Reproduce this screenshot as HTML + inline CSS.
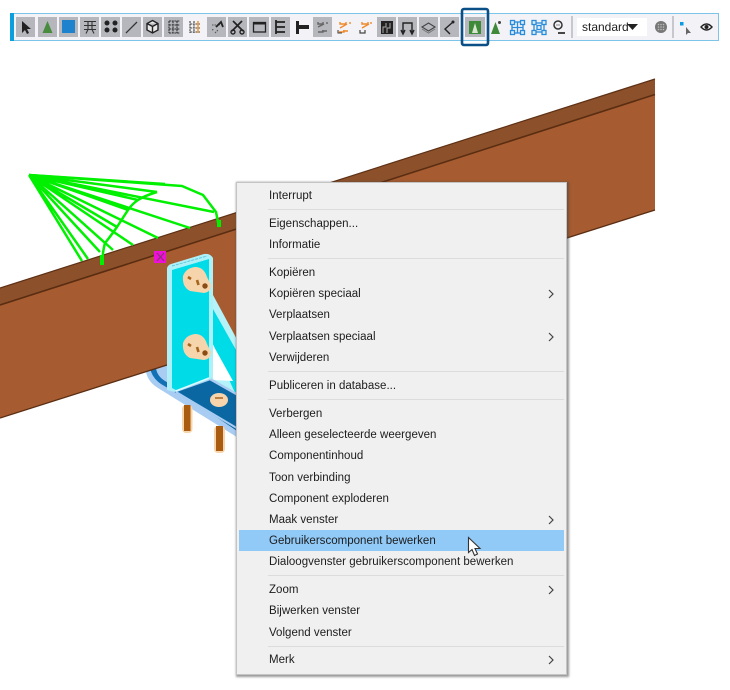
<!DOCTYPE html>
<html><head><meta charset="utf-8">
<style>
html,body{margin:0;padding:0;background:#fff;width:730px;height:690px;overflow:hidden}
#g{position:absolute;left:0;top:0}
#m{position:absolute;left:236px;top:182px;width:329px;height:491px;background:#f0f0f0;border:1px solid #c4c4c4;box-shadow:1px 1px 2px 1px rgba(70,70,70,.55)}
#m div{position:absolute;left:32px;font:11.5px/14px "Liberation Sans",sans-serif;color:#1c1c1c;white-space:nowrap;letter-spacing:.02px}
#m i{position:absolute;left:31px;width:296px;height:1px;background:#dcdcdc}
#m b{position:absolute;left:2px;top:347px;width:325px;height:21px;background:#91c9f7}
#m svg{position:absolute;left:311px}
#s{position:absolute;left:577px;top:18px;width:70px;height:18px;background:#fff;font:12px/18px "Liberation Sans",sans-serif;color:#222;text-indent:5px}
</style></head><body>
<svg id="g" width="730" height="690" viewBox="0 0 730 690">
<!-- base plate under beam -->
<path d="M146 365L146 372Q148 382 158 388L240 439L240 395L200 365Z" fill="#a9cdf2"/>
<path d="M150 368Q152 378 161 384L240 431L240 424L165 381Q157 376 156 368Z" fill="#1270b5"/>
<!-- bolts -->
<rect x="182" y="405" width="10.500" height="28" rx="4" fill="#f6d5ac"/><rect x="184" y="405" width="6.500" height="26" fill="#a95c10"/>
<rect x="214" y="426" width="11" height="27" rx="4" fill="#f6d5ac"/><rect x="216" y="426" width="7" height="25" fill="#a95c10"/>
<!-- beam -->
<path d="M0 290L655 80L655 210L0 418Z" fill="#a65c30"/>
<path d="M0 288L655 79L655 95L0 305Z" fill="#8c512b"/>
<path d="M0 288L655 79" stroke="#5e3014" stroke-width="1.200" fill="none"/>
<path d="M0 305L655 94.500" stroke="#5a2d12" stroke-width="1.600" fill="none"/>
<path d="M0 418L655 210" stroke="#5a2d12" stroke-width="1.300" fill="none"/>
<!-- wires -->
<g stroke="#00f000" stroke-width="2.500" fill="none" stroke-linejoin="round">
<path d="M29 175L182 186L203 195L216 212L219 227"/>
<path d="M29 175L82 261M29 175L88 259M29 175L100 252M29 175L105 243M29 175L113 250M29 175L117 227M29 175L133 245M29 175L158 238M29 175L190 228M29 175L214 212M29 175L157 192M29 175L138 200M29 175L165 184M29 175L128 210"/>
<path d="M157 192Q144 196 138 200Q132 204 128 210L117 227Q110 237 105 243Q103 250 102 263"/>
</g>
<path d="M100 255h4v10h-4zM217 220h4v7h-4z" fill="#00f000"/>
<!-- magenta -->
<rect x="154" y="251" width="12" height="12" fill="#ee10d8"/><path d="M157 253l7 8M164 253l-7 8" stroke="#7a3a60" stroke-width="1"/>
<!-- stiffener -->
<path d="M209 295L213 295L240 345V402L210 381Z" fill="#b5f3fa"/>
<path d="M213 309L240 357V401L236 395L212 342L211 313Z" fill="#00dbe8"/>
<path d="M213 345L233 381L213 380Z" fill="#fff"/>
<!-- base top dark -->
<path d="M178 391L210 380L240 397V433Z" fill="#0a67a2"/>
<path d="M176 391L210 379L240 396" stroke="#a9cdf2" stroke-width="2.500" fill="none"/>
<path d="M176 392L240 430" stroke="#a9cdf2" stroke-width="2" fill="none"/>
<!-- plate -->
<path d="M167 268Q168 265 171 264L204 254Q210 253 213 258V378L175 392L167 390Z" fill="#aef0f8"/>
<path d="M172 270L209 259V378L176 390L172 388Z" fill="#00dbe8"/>
<path d="M172 266L207 256" stroke="#5fc9de" stroke-width="1" stroke-dasharray="3 1" fill="none"/>
<path d="M176 391L209 378" stroke="#d8fbff" stroke-width="1.500" fill="none"/>
<!-- nuts -->
<g><path d="M183 276Q186 268 195 267Q204 267 207 277L211 285Q211 292 204 293L190 291Q182 287 183 276Z" fill="#f6d5ac"/>
<path d="M188 277l3 2M197 280l1.500 5" stroke="#a5651f" stroke-width="2.600" fill="none"/><circle cx="205" cy="286" r="2.700" fill="#8a4d14"/></g>
<g transform="translate(0,67)"><path d="M183 276Q186 268 195 267Q204 267 207 277L211 285Q211 292 204 293L190 291Q182 287 183 276Z" fill="#f6d5ac"/>
<path d="M188 277l3 2M197 280l1.500 5" stroke="#a5651f" stroke-width="2.600" fill="none"/><circle cx="205" cy="286" r="2.700" fill="#8a4d14"/></g>
<ellipse cx="219" cy="400" rx="9" ry="7" fill="#f6d5ac"/><path d="M215 398h8" stroke="#a5651f" stroke-width="1.500"/>

<!-- toolbar -->
<rect x="10.500" y="13.500" width="708" height="27" fill="#f3f3f7" stroke="#7cc4e8"/>
<rect x="10" y="13" width="4" height="28" fill="#0aa0de"/>
<path d="M14 40.500H719" stroke="#7cc4e8"/>
<g fill="#b5b7bd">
<rect x="16" y="17" width="19" height="20"/><rect x="38" y="17" width="19" height="20"/><rect x="59" y="17" width="19" height="20"/><rect x="80" y="17" width="19" height="20"/><rect x="101" y="17" width="19" height="20"/><rect x="122" y="17" width="19" height="20"/><rect x="143" y="17" width="19" height="20"/><rect x="164" y="17" width="19" height="20"/><rect x="207" y="17" width="19" height="20"/><rect x="228" y="17" width="19" height="20"/><rect x="249" y="17" width="20" height="20"/><rect x="271" y="17" width="19" height="20"/><rect x="313" y="17" width="19" height="20"/><rect x="377" y="17" width="19" height="20"/><rect x="398" y="17" width="19" height="20"/><rect x="419" y="17" width="19" height="20"/><rect x="440" y="17" width="19" height="20"/>
</g>
<!-- 1 arrow --><path d="M22 21L22 33L25 30L27 34L29 33L27 29L31 29Z" fill="#222"/>
<!-- 2 tri --><path d="M47.500 21L52.500 33H42.500Z" fill="#4a8c3f"/>
<!-- 3 --><rect x="62" y="20" width="13" height="13" fill="#1f82cc"/>
<!-- 4 --><path d="M84 21.500h12M84 25.500h12M84 29.500h12M88 21v9M92 21v9M86 33.500l2-4M94 33.500l-2-4" stroke="#333" stroke-width="1.100" fill="none"/>
<!-- 5 --><g fill="#222"><circle cx="107" cy="23" r="2.500"/><circle cx="115" cy="23" r="2.500"/><circle cx="107" cy="30" r="2.500"/><circle cx="115" cy="30" r="2.500"/></g>
<!-- 6 --><path d="M126 33L137 22" stroke="#333" stroke-width="1.300"/>
<!-- 7 --><path d="M152.500 20.500L158 23.500V30L152.500 33L147 30V23.500ZM147 23.500L152.500 26.500L158 23.500M152.500 26.500V33" fill="#e8e8e8" stroke="#222" stroke-width="1.400"/>
<!-- 8 --><path d="M169 21v12M173 21v12M177 21v12M169 21h11M169 25h11M169 29h11M169 33h11" stroke="#333" stroke-width="1.100" stroke-dasharray="2 .7" fill="none"/>
<!-- 9 --><path d="M190 21v12M194 21v12M190 24h10M190 28h10M190 32h10" stroke="#444" stroke-width="1.100" stroke-dasharray="2 .7" fill="none"/><path d="M198 21v12" stroke="#f09a3e" stroke-width="1.600"/>
<!-- 10 --><path d="M212 30l2-1M215 33l3-3M212 25l8-0" stroke="#555" stroke-width="1.100" stroke-dasharray="1.500 1" fill="none"/><path d="M216 27L221 22L223 27" stroke="#222" stroke-width="1.800" fill="none"/>
<!-- 11 scissors --><path d="M233 21L243 31M242 21L232 31" stroke="#222" stroke-width="1.700"/><circle cx="233" cy="32" r="2" fill="none" stroke="#222" stroke-width="1.400"/><circle cx="242" cy="32" r="2" fill="none" stroke="#222" stroke-width="1.400"/>
<!-- 12 --><rect x="253.500" y="22.500" width="12" height="9.500" fill="none" stroke="#222" stroke-width="1.300"/><path d="M253 23.500h13" stroke="#222" stroke-width="2"/>
<!-- 13 --><path d="M276 20v14M276 22h9M276 27h9M276 32h9" stroke="#222" stroke-width="1.800" fill="none"/>
<!-- 14 --><path d="M296 21h3v13h-3zM299 25h10v4h-10z" fill="#222"/>
<!-- 15-17 --><path d="M318 22v2h5v-2M327 22v2M318 27l6-3M318 32h5v-2M322 31h5" stroke="#666" stroke-width="1.400" fill="none"/>
<path d="M340 22v2h6v-2M350 22v2M340 28l7-4M339 32h5v-2M343 31h5" stroke="#ee8a2c" stroke-width="1.400" fill="none"/><path d="M338 30v3h4" stroke="#444" stroke-width="1.100" fill="none"/>
<path d="M362 22v2h6v-2M371 22v2M362 28l7-4" stroke="#ee8a2c" stroke-width="1.400" fill="none"/><path d="M360 30v3h5v-3" stroke="#444" stroke-width="1.200" fill="none"/>
<!-- 18 --><rect x="381" y="21" width="12" height="13" fill="#222"/><path d="M383 33v-6h3v-4M387 33v-5h3v-5" stroke="#aaa" stroke-width="1" fill="none"/>
<!-- 19 --><path d="M403 33V23h9v10M401 30l2 4 2-4M410 30l2 4 2-4" stroke="#222" stroke-width="1.400" fill="none"/>
<!-- 20 --><path d="M422 27l6.500-4 6.500 4-6.500 4z" fill="none" stroke="#444" stroke-width="1.100"/><path d="M422 29l6.500 4 6.500-4" fill="none" stroke="#777" stroke-width="1"/>
<!-- 21 --><path d="M453 22L445 29L450 34" stroke="#222" stroke-width="1.400" fill="none"/><circle cx="453" cy="22" r="1.500" fill="#222"/>
<!-- selected --><rect x="465" y="17" width="20" height="20" fill="#b5b7bd"/><rect x="469" y="21" width="12" height="13" fill="#3f8a3a"/><path d="M475 23l3 10h-6Z" fill="#d8e6d0"/><rect x="462" y="9" width="26" height="36" rx="2" fill="none" stroke="#0b4f87" stroke-width="2.600"/>
<!-- tri dot --><path d="M495.500 22L500 34H491Z" fill="#3f8a3a"/><circle cx="499.500" cy="22.500" r="1.500" fill="#444"/>
<!-- blue grids --><g fill="none" stroke="#2a8bd8" stroke-width="1.300"><rect x="512" y="22" width="11" height="11"/><path d="M517.500 22v11M512 27.500h11"/><rect x="510.500" y="20.500" width="4" height="4" fill="#dbeeff"/><rect x="520.500" y="20.500" width="4" height="4" fill="#dbeeff"/><rect x="510.500" y="30.500" width="4" height="4" fill="#dbeeff"/><rect x="520.500" y="30.500" width="4" height="4" fill="#dbeeff"/>
<rect x="534" y="23" width="10" height="9"/><rect x="532" y="20.500" width="4" height="4" fill="#dbeeff"/><rect x="542" y="20.500" width="4" height="4" fill="#dbeeff"/><rect x="532" y="30.500" width="4" height="4" fill="#dbeeff"/><rect x="542" y="30.500" width="4" height="4" fill="#dbeeff"/><rect x="537" y="25.500" width="4" height="4" fill="#dbeeff"/></g>
<!-- magnifier --><circle cx="558" cy="25" r="4" fill="none" stroke="#333" stroke-width="1.500"/><path d="M558 33h7" stroke="#333" stroke-width="1.800"/><path d="M556 25h4" stroke="#888"/>
<rect x="571" y="16" width="2" height="22" fill="#c6c8ce"/>
<circle cx="661" cy="27" r="6" fill="#777"/><g fill="#bbb"><circle cx="658.500" cy="24.500" r=".8"/><circle cx="661" cy="24.500" r=".8"/><circle cx="663.500" cy="24.500" r=".8"/><circle cx="658.500" cy="27" r=".8"/><circle cx="661" cy="27" r=".8"/><circle cx="663.500" cy="27" r=".8"/><circle cx="658.500" cy="29.500" r=".8"/><circle cx="661" cy="29.500" r=".8"/><circle cx="663.500" cy="29.500" r=".8"/></g>
<rect x="672" y="16" width="2" height="22" fill="#c6c8ce"/>
<rect x="680" y="22" width="3.500" height="3.500" fill="#0a9be0"/><path d="M686 27V35L688 33L691 33Z" fill="#666"/>
<path d="M701 27Q706.500 21 712 27Q706.500 33 701 27Z" fill="none" stroke="#222" stroke-width="1.400"/><circle cx="706.500" cy="27" r="2" fill="#222"/>
</svg>
<div id="s">standard<svg style="position:absolute;left:50px;top:6px" width="11" height="6"><path d="M0 0H11L5.500 6Z" fill="#222"/></svg></div>
<div id="m">
<b></b>
<div style="top:6px">Interrupt</div><i style="top:26px"></i>
<div style="top:34px">Eigenschappen...</div>
<div style="top:55px">Informatie</div><i style="top:75px"></i>
<div style="top:83px">Kopiëren</div>
<div style="top:104px">Kopiëren speciaal</div><svg style="top:106px" width="6" height="10"><path d="M1 1l4 4-4 4" stroke="#444" stroke-width="1.200" fill="none"/></svg>
<div style="top:125px">Verplaatsen</div>
<div style="top:147px">Verplaatsen speciaal</div><svg style="top:149px" width="6" height="10"><path d="M1 1l4 4-4 4" stroke="#444" stroke-width="1.200" fill="none"/></svg>
<div style="top:168px">Verwijderen</div><i style="top:188px"></i>
<div style="top:196px">Publiceren in database...</div><i style="top:216px"></i>
<div style="top:224px">Verbergen</div>
<div style="top:245px">Alleen geselecteerde weergeven</div>
<div style="top:266px">Componentinhoud</div>
<div style="top:288px">Toon verbinding</div>
<div style="top:309px">Component exploderen</div>
<div style="top:330px">Maak venster</div><svg style="top:332px" width="6" height="10"><path d="M1 1l4 4-4 4" stroke="#444" stroke-width="1.200" fill="none"/></svg>
<div style="top:351px">Gebruikerscomponent bewerken</div>
<div style="top:372px">Dialoogvenster gebruikerscomponent bewerken</div><i style="top:392px"></i>
<div style="top:400px">Zoom</div><svg style="top:402px" width="6" height="10"><path d="M1 1l4 4-4 4" stroke="#444" stroke-width="1.200" fill="none"/></svg>
<div style="top:421px">Bijwerken venster</div>
<div style="top:443px">Volgend venster</div><i style="top:463px"></i>
<div style="top:470px">Merk</div><svg style="top:472px" width="6" height="10"><path d="M1 1l4 4-4 4" stroke="#444" stroke-width="1.200" fill="none"/></svg>
</div>
<svg style="position:absolute;left:466px;top:536px" width="18" height="22"><path d="M2.500 1.500V16.500L6 13.500L8.500 19.500L11.500 18L9 12.500H14Z" fill="#fff" stroke="#333" stroke-width="1.100"/></svg>
</body></html>
